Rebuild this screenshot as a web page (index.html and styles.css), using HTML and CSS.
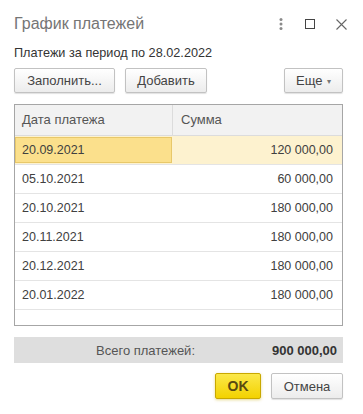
FILE: index.html
```html
<!DOCTYPE html>
<html lang="ru">
<head>
<meta charset="utf-8">
<title>График платежей</title>
<link rel="stylesheet" href="styles.css">
</head>
<body>
<div class="dialog">
  <div class="titlebar">
    <div class="title">График платежей</div>
    <div class="win-icons">
      <svg class="ico-dots" width="6" height="14" viewBox="0 0 6 14"><circle cx="3" cy="2.5" r="1.5" fill="#8a8a8a"/><circle cx="3" cy="7" r="1.5" fill="#8a8a8a"/><circle cx="3" cy="11.5" r="1.5" fill="#8a8a8a"/></svg>
      <svg class="ico-max" width="10" height="10" viewBox="0 0 10 10"><rect x="0.5" y="0.5" width="9" height="9" fill="none" stroke="#444" stroke-width="1"/></svg>
      <svg class="ico-close" width="11" height="11" viewBox="0 0 11 11"><path d="M0.5 0.5 L10.5 10.5 M10.5 0.5 L0.5 10.5" stroke="#666" stroke-width="1.1" fill="none"/></svg>
    </div>
  </div>
  <div class="subtitle">Платежи за период по 28.02.2022</div>
  <div class="toolbar">
    <button class="btn btn-fill">Заполнить...</button>
    <button class="btn btn-add">Добавить</button>
    <button class="btn btn-more">Еще <span class="caret">▾</span></button>
  </div>
  <div class="table">
    <div class="thead">
      <div class="th th-date">Дата платежа</div>
      <div class="th th-sum">Сумма</div>
    </div>
    <div class="row row-current"><div class="td td-date td-sel">20.09.2021</div><div class="td td-sum">120 000,00</div></div>
    <div class="row"><div class="td td-date">05.10.2021</div><div class="td td-sum">60 000,00</div></div>
    <div class="row"><div class="td td-date">20.10.2021</div><div class="td td-sum">180 000,00</div></div>
    <div class="row"><div class="td td-date">20.11.2021</div><div class="td td-sum">180 000,00</div></div>
    <div class="row"><div class="td td-date">20.12.2021</div><div class="td td-sum">180 000,00</div></div>
    <div class="row"><div class="td td-date">20.01.2022</div><div class="td td-sum">180 000,00</div></div>
  </div>
  <div class="total">
    <div class="total-label">Всего платежей:</div>
    <div class="total-value">900 000,00</div>
  </div>
  <div class="footer">
    <button class="btn btn-ok">OK</button>
    <button class="btn btn-cancel">Отмена</button>
  </div>
</div>
</body>
</html>
```
FILE: styles.css
```css
* { box-sizing: border-box; }
html, body { margin: 0; padding: 0; background: #fff; }
body {
  font-family: "Liberation Sans", Arial, sans-serif;
  color: #404040;
  width: 363px;
  height: 414px;
  overflow: hidden;
}
.dialog {
  padding: 13px 20px 0 14px;
  display: flex;
  flex-direction: column;
}
.titlebar {
  display: flex;
  align-items: center;
  height: 22px;
}
.title {
  font-size: 16px;
  line-height: 22px;
  color: #757575;
  flex: 1;
}
.win-icons {
  display: flex;
  align-items: center;
  margin-right: -4px;
  padding-top: 0;
}
.ico-dots { margin-right: 21px; }
.ico-max { margin-right: 21px; }
.subtitle {
  margin-top: 10px;
  font-size: 12.7px;
  line-height: 16px;
  color: #333;
}
.toolbar {
  margin-top: 7px;
  display: flex;
  height: 25px;
}
.btn {
  font-family: "Liberation Sans", Arial, sans-serif;
  font-size: 13px;
  color: #444;
  height: 25px;
  padding: 0;
  border: 1px solid #c2c2c2;
  border-radius: 2px;
  background: linear-gradient(#ffffff, #ececec);
  box-shadow: 0 1px 1px rgba(0,0,0,0.12);
}
.btn-fill { width: 101px; }
.btn-add { width: 82px; margin-left: 10px; }
.btn-more { width: 59px; margin-left: auto; }
.caret { font-size: 8px; color: #777; position: relative; top: -1px; margin-left: 1px; }
.table {
  margin-top: 11px;
  height: 222px;
  border: 1px solid #a6a6a6;
  display: flex;
  flex-direction: column;
}
.thead {
  display: flex;
  height: 31px;
  background: #f2f2f2;
  border-bottom: 1px solid #dcdcdc;
}
.th {
  font-size: 13px;
  line-height: 30px;
  color: #555;
}
.th-date { width: 158px; padding-left: 7px; border-right: 1px solid #dcdcdc; }
.th-sum { flex: 1; padding-left: 8px; }
.row {
  display: flex;
  height: 29px;
  border-bottom: 1px solid #e4e4e4;
}
.row-current { background: #fdf2cf; }
.td {
  font-size: 12.5px;
  line-height: 28px;
  color: #404040;
}
.td-date { width: 158px; padding-left: 7px; }
.td-sum { flex: 1; text-align: right; padding-right: 9px; }
.td-sel {
  margin-top: 1px;
  height: 26px;
  line-height: 24px;
  padding-left: 6px;
  background: #fbe08c;
  border: 1px solid #e8c86a;
  width: 157px;
  margin-right: 1px;
}
.total {
  margin-top: 11px;
  height: 26px;
  background: #dedede;
  display: flex;
  align-items: center;
  font-size: 13px;
}
.total-label { width: 181px; text-align: right; color: #555; }
.total-value { flex: 1; text-align: right; padding-right: 6px; font-weight: bold; color: #333; }
.footer {
  margin-top: 10px;
  display: flex;
  justify-content: flex-end;
}
.btn-ok {
  width: 46px;
  height: 26px;
  font-weight: bold;
  font-size: 14px;
  color: #5a4a10;
  border: 1px solid #c9a800;
  background: linear-gradient(#fbe84a, #f3d200);
  box-shadow: 0 1px 3px rgba(200,170,0,0.45);
}
.btn-cancel { width: 72px; height: 26px; margin-left: 10px; font-size: 13px; }
```
